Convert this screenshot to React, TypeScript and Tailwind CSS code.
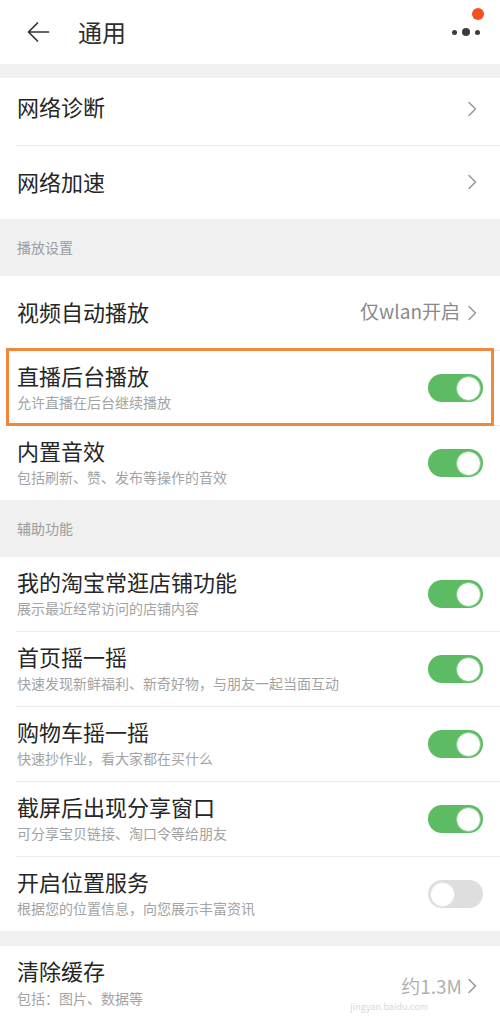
import React from "react";

const font = { fontFamily: '"Noto Sans CJK SC", "Noto Sans", sans-serif' };

function Chevron() {
  return (
    <svg width="12" height="16" viewBox="0 0 12 16" className="shrink-0">
      <path d="M3 1.5 L9.5 8 L3 14.5" fill="none" stroke="#9a9a9a" strokeWidth="1.6" strokeLinecap="round" strokeLinejoin="round" />
    </svg>
  );
}

function Toggle({ on }: { on: boolean }) {
  return on ? (
    <div className="w-[55px] h-[28px] rounded-full bg-[#5cbb63] flex items-center justify-end pr-[2px] shrink-0">
      <div className="w-[25px] h-[25px] rounded-full bg-white border border-[#7fcf84]" />
    </div>
  ) : (
    <div className="w-[55px] h-[28px] rounded-full bg-[#dedede] flex items-center justify-start pl-[2px] shrink-0">
      <div className="w-[25px] h-[25px] rounded-full bg-white border border-[#e6e6e6]" />
    </div>
  );
}

function Divider() {
  return (
    <div className="bg-white pl-[16px]">
      <div className="h-px bg-[#ececec]" />
    </div>
  );
}

function Section({ title }: { title: string }) {
  return (
    <div className="h-[57px] bg-[#f0f0f0] flex items-center pl-[17px] pb-[1px] text-[14px] text-[#9c9c9c]">
      {title}
    </div>
  );
}

function ToggleRow({ title, sub, on }: { title: string; sub: string; on: boolean }) {
  return (
    <div className="h-[74px] bg-white flex items-start pl-[17px] pr-[17px]">
      <div className="flex-1 pt-[9px] min-w-0">
        <div className="text-[22px] leading-[30px] text-[#262626]">{title}</div>
        <div className="text-[14px] leading-[20px] mt-[2px] text-[#a3a3a3]">{sub}</div>
      </div>
      <div className="self-center">
        <Toggle on={on} />
      </div>
    </div>
  );
}

export default function App() {
  return (
    <div className="w-[500px] h-[1020px] overflow-hidden bg-[#f0f0f0]" style={font}>
      {/* Header */}
      <div className="h-[64px] bg-white flex items-center pl-[26px] pr-[18px] relative">
        <svg width="24" height="22" viewBox="0 0 24 22" className="shrink-0">
          <path d="M22.5 11 H2.5 M11.5 2 L2.5 11 L11.5 20" fill="none" stroke="#333" strokeWidth="1.7" strokeLinecap="round" strokeLinejoin="round" />
        </svg>
        <div className="ml-[28px] text-[24px] text-[#2e2e2e] leading-none pb-[1px]">通用</div>
        <div className="flex-1" />
        <div className="flex items-center gap-[5px] mr-[2px]">
          <div className="w-[5px] h-[5px] rounded-full bg-[#3a3a3a]" />
          <div className="w-[8px] h-[8px] rounded-full bg-[#3a3a3a]" />
          <div className="w-[5px] h-[5px] rounded-full bg-[#3a3a3a]" />
        </div>
        <div className="absolute left-[472px] top-[8px] w-[12px] h-[12px] rounded-full bg-[#f4511e]" />
      </div>

      <div className="h-[14px]" />

      <div className="h-[67px] bg-white flex items-center pl-[17px] pr-[22px] pb-[10px]">
        <div className="flex-1 text-[22px] text-[#262626]">网络诊断</div>
        <div className="mt-[4px]"><Chevron /></div>
      </div>
      <Divider />
      <div className="h-[73px] bg-white flex items-center pl-[17px] pr-[22px] pb-[3px]">
        <div className="flex-1 text-[22px] text-[#262626]">网络加速</div>
        <div className="mt-[2px]"><Chevron /></div>
      </div>

      <Section title="播放设置" />

      <div className="h-[74px] bg-white flex items-center pl-[17px] pr-[22px] pb-[3px]">
        <div className="flex-1 text-[22px] text-[#262626]">视频自动播放</div>
        <div className="text-[19px] text-[#8a8a8a] mr-[6px]">仅wlan开启</div>
        <div className="mt-[2px]"><Chevron /></div>
      </div>
      <Divider />
      <div className="relative">
        <ToggleRow title="直播后台播放" sub="允许直播在后台继续播放" on={true} />
        <div className="absolute left-[6px] right-[6px] top-[-3px] bottom-[-1px] border-[3px] border-[#f0883c] pointer-events-none" />
      </div>
      <Divider />
      <ToggleRow title="内置音效" sub="包括刷新、赞、发布等操作的音效" on={true} />

      <Section title="辅助功能" />

      <ToggleRow title="我的淘宝常逛店铺功能" sub="展示最近经常访问的店铺内容" on={true} />
      <Divider />
      <ToggleRow title="首页摇一摇" sub="快速发现新鲜福利、新奇好物，与朋友一起当面互动" on={true} />
      <Divider />
      <ToggleRow title="购物车摇一摇" sub="快速抄作业，看大家都在买什么" on={true} />
      <Divider />
      <ToggleRow title="截屏后出现分享窗口" sub="可分享宝贝链接、淘口令等给朋友" on={true} />
      <Divider />
      <ToggleRow title="开启位置服务" sub="根据您的位置信息，向您展示丰富资讯" on={false} />

      <div className="h-[15px]" />

      <div className="h-[80px] bg-white flex items-start pl-[17px] pr-[22px] relative">
        <div className="flex-1 pt-[9px]">
          <div className="text-[22px] leading-[30px] text-[#262626]">清除缓存</div>
          <div className="text-[14px] leading-[20px] mt-[3px] text-[#a3a3a3]">包括：图片、数据等</div>
        </div>
        <div className="flex items-center pt-[30px]">
          <div className="text-[19px] text-[#b0b0b0] mr-[4px] leading-none">约1.3M</div>
          <Chevron />
        </div>
        <div className="absolute right-[72px] top-[56px] text-[9px] text-[#d8d8d8] leading-none">jingyan.baidu.com</div>
      </div>
    </div>
  );
}
